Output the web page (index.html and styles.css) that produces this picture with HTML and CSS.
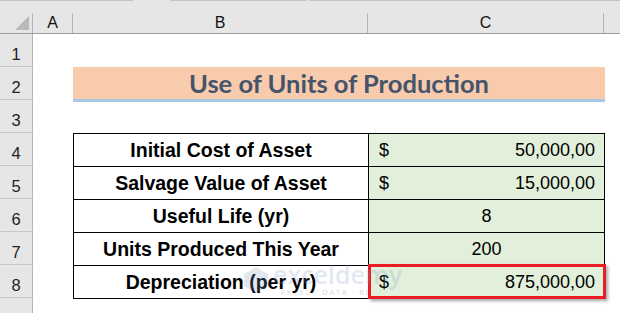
FILE: index.html
```html
<!DOCTYPE html>
<html>
<head>
<meta charset="utf-8">
<link rel="stylesheet" href="styles.css">
</head>
<body>
<div class="sheet">
  <div class="topbar">
    <span class="seg seg1"></span><span class="seg seg2"></span><span class="seg seg3"></span>
  </div>
  <div class="hdr">
    <div class="corner"><svg width="14" height="14" viewBox="0 0 14 14"><polygon points="14,0 14,14 0,14" fill="#b9b9b9"/></svg></div>
    <div class="colh col-a">A</div>
    <div class="colh col-b">B</div>
    <div class="colh col-c">C</div>
    <div class="colh col-rest"></div>
  </div>
  <div class="row"><div class="rn">1</div></div>
  <div class="row"><div class="rn">2</div><div class="ca"></div><div class="title">Use of Units of Production</div></div>
  <div class="row"><div class="rn">3</div></div>
  <div class="row"><div class="rn">4</div><div class="ca"></div><div class="cb">Initial Cost of Asset</div><div class="cc money"><span>$</span><span>50,000,00</span></div></div>
  <div class="row"><div class="rn">5</div><div class="ca"></div><div class="cb">Salvage Value of Asset</div><div class="cc money"><span>$</span><span>15,000,00</span></div></div>
  <div class="row"><div class="rn">6</div><div class="ca"></div><div class="cb">Useful Life (yr)</div><div class="cc center">8</div></div>
  <div class="row"><div class="rn">7</div><div class="ca"></div><div class="cb">Units Produced This Year</div><div class="cc center">200</div></div>
  <div class="row"><div class="rn">8</div><div class="ca"></div><div class="cb last">Depreciation (per yr)</div><div class="cc money last hl"><span>$</span><span>875,000,00</span></div></div>
  <div class="row"><div class="rn"></div></div>
  <div class="watermark">
    <svg class="wm-logo" width="26" height="28" viewBox="0 0 26 28"><polygon points="13,1 25,8 25,20 13,27 1,20 1,8" fill="#7f9cc8"/></svg>
    <div class="wm-text">
      <div class="wm-main">exceldemy</div>
      <div class="wm-sub">EXCEL · DATA · BI</div>
    </div>
  </div>
</div>
</body>
</html>
```
FILE: styles.css
```css
html, body {
  margin: 0;
  padding: 0;
  background: #ffffff;
  overflow: hidden;
}
.sheet {
  position: relative;
  width: 620px;
  height: 313px;
  overflow: hidden;
  font-family: "Liberation Sans", Arial, sans-serif;
  color: #000;
}
.topbar {
  height: 13px;
  background: #e6e6e6;
  display: flex;
  align-items: flex-start;
}
.seg {
  height: 1px;
  background: #c3c3c3;
}
.seg1 { width: 133px; }
.seg2 { width: 137px; margin-left: 37px; }
.seg3 { flex: 1; margin-left: 3px; }
.hdr {
  height: 21px;
  display: flex;
  background: #e6e6e6;
  border-bottom: 1px solid #9c9c9c;
  box-sizing: border-box;
}
.corner {
  width: 33px;
  flex: none;
  box-sizing: border-box;
  border-right: 1px solid #b4b4b4;
  display: flex;
  align-items: flex-end;
  justify-content: flex-end;
  padding: 0 3px 3px 0;
}
.colh {
  flex: none;
  box-sizing: border-box;
  border-right: 1px solid #b4b4b4;
  display: flex;
  justify-content: center;
  align-items: flex-end;
  font-size: 16px;
  line-height: 18px;
  color: #111;
  padding-bottom: 1px;
}
.col-a { width: 40px; }
.col-b { width: 295px; }
.col-c { width: 236px; }
.col-rest { flex: 1; border-right: none; }
.row {
  height: 33px;
  display: flex;
}
.rn {
  width: 33px;
  flex: none;
  box-sizing: border-box;
  background: #e6e6e6;
  border-right: 1px solid #b4b4b4;
  border-bottom: 1px solid #c8c8c8;
  display: flex;
  justify-content: center;
  align-items: flex-end;
  font-size: 16.5px;
  line-height: 20px;
  color: #222;
  padding-bottom: 2px;
}
.ca {
  width: 40px;
  flex: none;
}
.title {
  width: 532px;
  height: 35px;
  flex: none;
  box-sizing: border-box;
  background: #f8cbad;
  border-bottom: 3px solid #a9c8e6;
  display: flex;
  justify-content: center;
  align-items: center;
  font-family: Lato, "Open Sans", sans-serif;
  font-weight: 700;
  font-size: 25.5px;
  color: #44546a;
  padding-bottom: 1px;
  position: relative;
  z-index: 1;
}
.cb, .cc {
  flex: none;
  box-sizing: border-box;
  border-top: 1px solid #000;
  border-left: 1px solid #000;
  display: flex;
  align-items: center;
  padding-top: 1px;
}
.cb {
  width: 295px;
  justify-content: center;
  font-weight: 700;
  font-size: 19.5px;
}
.cc {
  width: 237px;
  background: #e2efda;
  border-right: 1px solid #000;
  font-size: 18px;
}
.last { border-bottom: 1px solid #000; height: 34px; }
.money {
  justify-content: space-between;
  padding-left: 10px;
  padding-right: 9px;
}
.center { justify-content: center; }
.hl { position: relative; }
.hl::after {
  content: "";
  position: absolute;
  left: -1px;
  top: -2px;
  right: -2px;
  bottom: -1px;
  border: 3px solid #ea1c24;
  box-shadow: 2px 2px 3px rgba(0, 0, 0, 0.35);
  pointer-events: none;
}
.watermark {
  position: absolute;
  left: 243px;
  top: 262px;
  display: flex;
  align-items: center;
  gap: 4px;
  opacity: 0.22;
  pointer-events: none;
}
.wm-main {
  font-family: "Open Sans", sans-serif;
  font-size: 25px;
  line-height: 24px;
  font-weight: 600;
  color: #7f9cc8;
}
.wm-sub {
  font-family: "Open Sans", sans-serif;
  font-size: 8px;
  letter-spacing: 1.5px;
  color: #555;
  padding-left: 8px;
}
```
